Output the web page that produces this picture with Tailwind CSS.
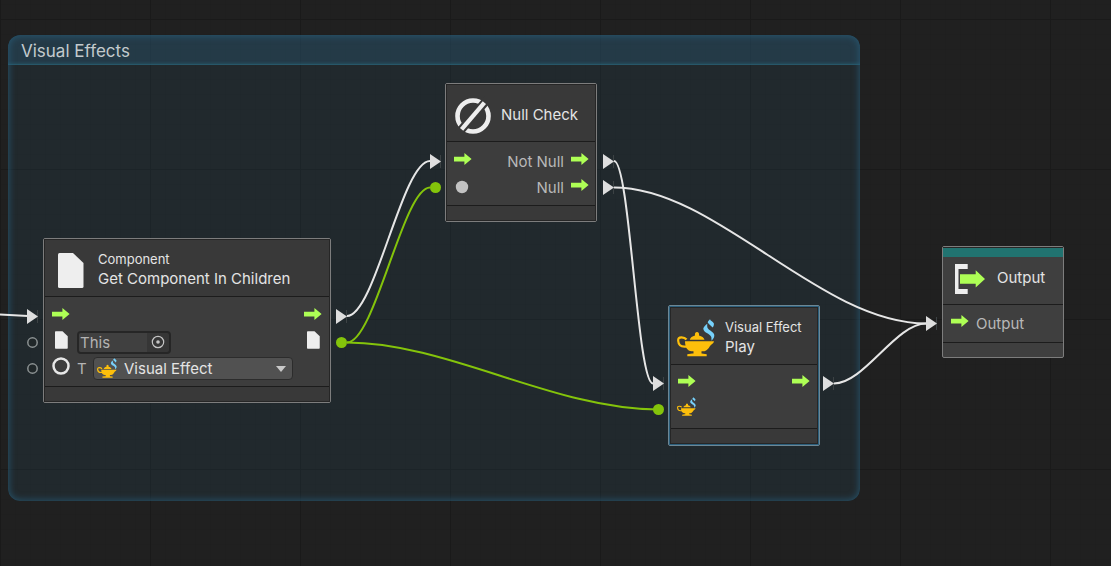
<!DOCTYPE html>
<html lang="en">
<head>
<meta charset="utf-8">
<meta name="viewport" content="width=device-width, initial-scale=1">
<title>Visual Effects graph</title>
<script src="https://cdn.jsdelivr.net/npm/@tailwindcss/browser@4"></script>
</head>
<body class="bg-[#202020] font-['Inter',sans-serif] text-[15px] text-[#e4e4e4]">
<svg class="hidden" aria-hidden="true">
  <symbol id="arrow" viewBox="0 0 18 12"><path fill="#aeff55" d="M0 3.800h10.400V0L17.600 6l-7.200 6V8.400H0z"/></symbol>
  <symbol id="doc" viewBox="0 0 26 35"><path fill="#eee" d="M1.500 0H15l10.500 10V33.500q0 1.500-1.500 1.500h-22.500q-1.500 0-1.500-1.500V1.500Q0 0 1.500 0z"/></symbol>
  <symbol id="port" viewBox="0 0 12 15"><path stroke="#3c4244" d="M10.500 1v13"/><path fill="#dedede" d="M0 0l11 7.500L0 15z"/></symbol>
  <symbol id="lamp" viewBox="-1 11 38 38">
    <path fill="none" stroke="#fdbf0b" stroke-width="2.200" d="M8.500 31.500C7 29.500 5.500 29.400 3.500 29.400.8 29.400 0 30.500.2 33c.3 3.500 2.300 5.800 6.800 5.600h3"/>
    <path fill="#fdbf0b" d="M7 33.300h29c-.3 2.200-2.500 2.800-4 4.700-1.500 2.500-3.500 5.300-6.500 5.300h-12C9.500 43.300 7 39 7 33.300zM11.800 31.700c.5-2.300 2.500-3.400 5.200-4.200-.4-2 .5-3.500 2-3.500s2.400 1.500 2 3.500c2.700.8 4.900 1.900 5.500 4.200zM15.500 43h8v2.500h-8zM9.300 46.300q9.700-2.200 19.400 0v2H9.300z"/>
    <path fill="#77d1fb" d="M32 11.300c-1 .8-2 1.800-2.300 3.200 1 2 3.500 3 4.800 5 1.200-1 1.500-2.500 1.400-4-.8-1.700-3.400-2.500-3.900-4.200zM29.300 15.700c-1.800 1.300-3.500 2.800-4 4.800.2 4.500 6.500 4.800 8 8.500.3 1.300 0 2.500.4 3.700 1.600-1.700 2.800-3.700 2.600-5.700-.6-3.500-5.800-4.500-6.900-7.500-.4-1.300-.2-2.500-.1-3.800z"/>
  </symbol>
</svg>

<main class="relative min-h-screen overflow-hidden">
  <svg class="absolute inset-0 h-full w-full" aria-hidden="true">
    <defs>
      <pattern id="minor" width="15" height="15" y="4" patternUnits="userSpaceOnUse"><path stroke="#1e1e1e" stroke-opacity=".6" d="M.5 0v15M0 .5h15"/></pattern>
      <pattern id="major" width="150" height="150" y="19" patternUnits="userSpaceOnUse"><path stroke="#1a1a1a" d="M.5 0v150M0 .5h150"/></pattern>
    </defs>
    <rect width="100%" height="100%" fill="url(#minor)"/>
    <rect width="100%" height="100%" fill="url(#major)"/>
  </svg>

  <section class="absolute left-[8px] top-[35px] h-[466px] w-[852px] overflow-hidden rounded-xl bg-[#264a5a]/22">
    <h1 class="flex h-[30px] items-center border-b border-[#2a6478]/70 bg-[#2a5c78]/35 px-[13px] pt-[4px] text-[17px] text-[#c3cacd] shadow-[inset_0_-3px_3px_-2px_#28647880]">Visual Effects</h1>
    <div class="pointer-events-none absolute inset-0 rounded-xl shadow-[inset_0_0_7px_1px_#285d78cc]"></div>
  </section>

  <svg class="absolute inset-0 h-full w-full" aria-hidden="true">
    <g fill="none" stroke-width="2">
      <g stroke="#84c40b">
        <path d="M347 342.500C375 342.500 403 187.500 430 187.500"/>
        <path d="M347 342.500C447 342.500 554 409.500 658 409.500"/>
      </g>
      <g stroke="#e6e6e6">
        <path d="M0 314.500L28 316"/>
        <path d="M347 316C375 316 402 161 430 161"/>
        <path d="M614 161C630 161 637 383.500 653 383.500"/>
        <path d="M614 187.500C716 187.500 820 323.500 926 323.500"/>
        <path d="M834 383.500C864 383.500 896 323.500 926 323.500"/>
      </g>
    </g>
    <g fill="#84c40b">
      <circle cx="341.500" cy="342.500" r="5.500"/><circle cx="435.500" cy="187.500" r="5.500"/><circle cx="658.500" cy="409.500" r="5.500"/>
    </g>
    <g fill="#202729" stroke="#8b9192" stroke-width="1.500">
      <circle cx="32.500" cy="342.500" r="4.700"/><circle cx="32.500" cy="368.500" r="4.700"/>
    </g>
    <use href="#port" x="27" y="309" width="12" height="15"/>
    <use href="#port" x="336" y="309" width="12" height="15"/>
    <use href="#port" x="430" y="154" width="12" height="15"/>
    <use href="#port" x="603" y="154" width="12" height="15"/>
    <use href="#port" x="603" y="180" width="12" height="15"/>
    <use href="#port" x="653" y="376" width="12" height="15"/>
    <use href="#port" x="823" y="376" width="12" height="15"/>
    <use href="#port" x="926" y="316" width="12" height="15"/>
  </svg>

  <!-- Get Component In Children -->
  <article class="absolute left-[43px] top-[238px] w-[288px] rounded-xs border border-[#7d7d7d] bg-[#3d3d3d]">
    <div class="border border-[#262626]">
      <header class="flex h-[57px] items-center gap-2 border-b border-[#1c1c1c] bg-[#393939] px-[7px]">
        <svg class="h-[56px] w-[38px] shrink-0" aria-hidden="true"><use href="#doc" x="6" y="13" width="26" height="35"/></svg>
        <div class="whitespace-nowrap pt-[2px] leading-5"><p class="text-[13px]">Component</p><h2>Get Component In Children</h2></div>
      </header>
      <div class="px-[7px] pt-[6px] pb-[5px]">
        <div class="flex h-[26px] justify-between">
          <svg class="h-[26px] w-[18px]" aria-hidden="true"><use href="#arrow" y="5" width="18" height="12"/></svg>
          <svg class="h-[26px] w-[18px]" aria-hidden="true"><use href="#arrow" y="5" width="18" height="12"/></svg>
        </div>
        <div class="flex h-[26px] items-center gap-[7px]">
          <svg class="h-[26px] w-[18px]" aria-hidden="true"><use href="#doc" x="3" y="2" width="13" height="18"/></svg>
          <div class="flex h-[23px] w-[94px] overflow-hidden rounded-sm border-2 border-[#262626] bg-[#363636]">
            <input class="w-full min-w-0 bg-[#404040] pt-[2px] pl-px text-[15px] text-[#b4b4b4] outline-none" aria-label="Target object" value="This">
            <button class="flex w-[22px] shrink-0 items-center justify-center" type="button" aria-label="Pick object">
              <svg class="size-[14px]" viewBox="0 0 14 14" aria-hidden="true"><circle cx="7" cy="7" r="5.700" fill="none" stroke="#c4c4c4" stroke-width="1.200"/><circle cx="7" cy="7" r="1.800" fill="#c4c4c4"/></svg>
            </button>
          </div>
          <svg class="ml-auto h-[26px] w-[18px]" aria-hidden="true"><use href="#doc" x="3" y="2" width="13" height="18"/></svg>
        </div>
        <div class="flex h-[26px] items-center gap-[7px]">
          <svg class="h-[26px] w-[18px]" aria-hidden="true"><circle cx="9" cy="11" r="7.500" fill="none" stroke="#e8e8e8" stroke-width="2.500"/></svg>
          <label class="w-[9px] pt-[2px] text-[#b4b4b4]" for="type">T</label>
          <div class="relative h-[23px] w-[200px]">
            <select id="type" class="h-full w-full appearance-none rounded-sm border border-[#2c2c2c] bg-[#515151] pl-[30px] text-[15px] text-[#e4e4e4]"><option>Visual Effect</option></select>
            <svg class="pointer-events-none absolute left-[4px] top-[1px] size-[20px]" aria-hidden="true"><use href="#lamp" width="20" height="20"/></svg>
            <svg class="pointer-events-none absolute right-[7px] top-[9px] h-[6px] w-[10px]" viewBox="0 0 10 6" aria-hidden="true"><path fill="#c9c9c9" d="M0 0h10L5 6z"/></svg>
          </div>
        </div>
      </div>
      <footer class="h-[15px] border-t border-[#1c1c1c] bg-[#393939]"></footer>
    </div>
  </article>

  <!-- Null Check -->
  <article class="absolute left-[445px] top-[83px] w-[152px] rounded-xs border border-[#7d7d7d] bg-[#3d3d3d]">
    <div class="border border-[#262626]">
      <header class="flex h-[57px] items-center gap-[9px] border-b border-[#1c1c1c] bg-[#393939] px-[7px]">
        <svg class="h-[56px] w-[38px] shrink-0" aria-hidden="true">
          <circle cx="19" cy="31" r="15.500" fill="none" stroke="#eee" stroke-width="4.600"/>
          <path stroke="#393939" stroke-width="8.500" d="M4.500 48L33.500 14.200"/>
          <path stroke="#eee" stroke-width="4.300" d="M7.600 44.300L30.400 17.700"/>
        </svg>
        <h2 class="whitespace-nowrap pt-[5px]">Null Check</h2>
      </header>
      <div class="pl-[7px] pr-[6px] pt-[6px] pb-[5px] text-[#b8b8b8]">
        <div class="flex h-[26px] items-center gap-[7px]">
          <svg class="h-[26px] w-[18px]" aria-hidden="true"><use href="#arrow" y="5" width="18" height="12"/></svg>
          <span class="ml-auto pt-[2px]">Not Null</span>
          <svg class="h-[26px] w-[18px]" aria-hidden="true"><use href="#arrow" y="5" width="18" height="12"/></svg>
        </div>
        <div class="flex h-[26px] items-center gap-[7px]">
          <svg class="h-[26px] w-[18px]" aria-hidden="true"><circle cx="8" cy="13" r="6.200" fill="#c2c2c2"/></svg>
          <span class="ml-auto pt-[2px]">Null</span>
          <svg class="h-[26px] w-[18px]" aria-hidden="true"><use href="#arrow" y="5" width="18" height="12"/></svg>
        </div>
      </div>
      <footer class="h-[15px] border-t border-[#1c1c1c] bg-[#393939]"></footer>
    </div>
  </article>

  <!-- Visual Effect: Play (selected) -->
  <article class="absolute left-[668px] top-[305px] w-[152px] rounded-xs border border-[#6d8794] bg-[#3d3d3d]">
    <div class="border border-[#2c5f7c]">
      <div class="border border-[#262626]">
        <header class="flex h-[57px] items-center gap-[9px] border-b border-[#1c1c1c] bg-[#393939] px-[7px]">
          <svg class="h-[56px] w-[38px] shrink-0 overflow-visible" aria-hidden="true"><use href="#lamp" x="-1" y="11" width="38" height="38"/></svg>
          <div class="whitespace-nowrap pt-[2px] leading-5"><p class="text-[13px]">Visual Effect</p><h2>Play</h2></div>
        </header>
        <div class="px-[7px] pt-[6px] pb-[5px]">
          <div class="flex h-[26px] justify-between">
            <svg class="h-[26px] w-[18px]" aria-hidden="true"><use href="#arrow" y="4" width="18" height="12"/></svg>
            <svg class="h-[26px] w-[18px]" aria-hidden="true"><use href="#arrow" y="4" width="18" height="12"/></svg>
          </div>
          <div class="flex h-[26px]">
            <svg class="h-[26px] w-[18px] overflow-visible" aria-hidden="true"><use href="#lamp" x="-1" width="19" height="19"/></svg>
          </div>
        </div>
        <footer class="h-[15px] border-t border-[#1c1c1c] bg-[#393939]"></footer>
      </div>
    </div>
  </article>

  <!-- Output -->
  <article class="absolute left-[942px] top-[246px] w-[122px] rounded-xs border border-[#7d7d7d] bg-[#3f3f3f]">
    <div class="h-[10px] border-t border-[#262626] bg-[#217370]"></div>
    <header class="flex h-[48px] items-center gap-2 border-b border-[#1c1c1c] px-2">
      <svg class="h-[47px] w-[38px] shrink-0" aria-hidden="true">
        <path fill="#eee" d="M4 7h12.700v5H7.500v20h9.200v5H4z"/>
        <path fill="#aeff55" d="M9 17.300h15.700v-4L34 22l-9.300 8.500v-3.800H9z"/>
      </svg>
      <h2 class="pb-1">Output</h2>
    </header>
    <div class="px-2 pt-[6px] pb-[5px] text-[#b8b8b8]">
      <div class="flex h-[26px] items-center gap-[7px]">
        <svg class="h-[26px] w-[18px]" aria-hidden="true"><use href="#arrow" y="4" width="18" height="12"/></svg>
        <span>Output</span>
      </div>
    </div>
    <footer class="h-[15px] border-t border-[#1c1c1c]"></footer>
  </article>
</main>
</body>
</html>
